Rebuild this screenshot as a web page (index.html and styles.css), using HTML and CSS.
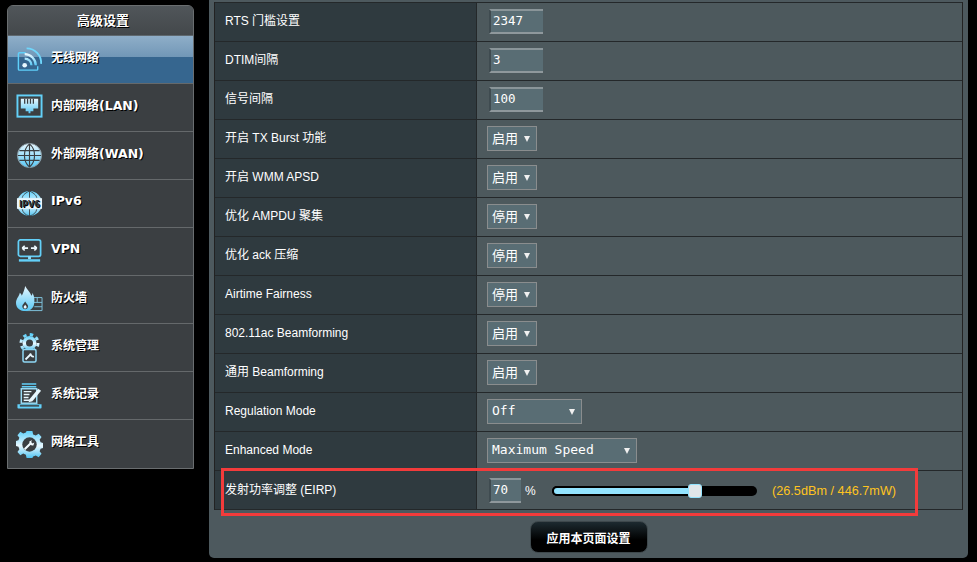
FILE: index.html
```html
<!DOCTYPE html>
<html lang="zh-CN">
<head>
<meta charset="utf-8">
<title>高级设置</title>
<link rel="stylesheet" href="styles.css">
</head>
<body>
<svg class="defs" width="0" height="0" aria-hidden="true">
  <defs>
    <linearGradient id="ice" x1="0" y1="0" x2="0" y2="1">
      <stop offset="0" stop-color="#5fd0fa"/>
      <stop offset="0.55" stop-color="#e8f8ff"/>
      <stop offset="1" stop-color="#4fc4f2"/>
    </linearGradient>
    <linearGradient id="sky" x1="0" y1="0" x2="0" y2="1">
      <stop offset="0" stop-color="#e6f7ff"/>
      <stop offset="1" stop-color="#58c8f5"/>
    </linearGradient>
  </defs>
</svg>
<div class="page">
  <aside class="sidebar">
    <div class="side-title">高级设置</div>
    <nav class="menu">
      <a class="item active">
        <svg class="icon" viewBox="0 0 28 28"><path d="M10 7H3.500a1 1 0 0 0-1 1v16a1 1 0 0 0 1 1h18a1 1 0 0 0 1-1v-3" fill="none" stroke="#5fd0fa" stroke-width="1.500"/><circle cx="9" cy="20" r="2.400" fill="#e8f8ff"/><path d="M9 13a7 7 0 0 1 7 7M9 8.500a11.500 11.500 0 0 1 11.500 11.500" fill="none" stroke="url(#sky)" stroke-width="2.400"/><path d="M11 2.500a15 15 0 0 1 15 16" fill="none" stroke="#6fd6fb" stroke-width="1.900"/></svg>
        <span><span class="cjk">无线网络</span></span>
      </a>
      <a class="item">
        <svg class="icon" viewBox="0 0 28 28"><rect x="1.500" y="1.500" width="25" height="22" fill="none" stroke="#63d0f8" stroke-width="2"/><path d="M5 5h18v10h-5v3h-3v2h-2v-2h-3v-3H5z" fill="url(#sky)"/><path d="M9 5v5M12 5v5M15 5v5M18 5v5" stroke="#3b3f42" stroke-width="1.300"/></svg>
        <span><span class="cjk">内部网络</span>(LAN)</span>
      </a>
      <a class="item">
        <svg class="icon" viewBox="0 0 28 28"><circle cx="14" cy="14" r="12.500" fill="url(#sky)" stroke="#8a9aa2" stroke-width="1"/><path d="M2 14h24M3.500 9h21M3.500 19h21M14 2v24M14 2c-7 6-7 18 0 24M14 2c7 6 7 18 0 24" fill="none" stroke="#3b3f42" stroke-width="1.200"/></svg>
        <span><span class="cjk">外部网络</span>(WAN)</span>
      </a>
      <a class="item">
        <svg class="icon" viewBox="0 0 28 28"><circle cx="14" cy="14" r="13" fill="url(#ice)"/><path d="M14 1v7M14 20v7M14 1C8 4 7 6 6.500 8M14 1c6 3 7 5 7.500 7M6.500 20c.5 3 3 6 7.500 7M21.500 20c-.5 3-3 6-7.500 7" fill="none" stroke="#3b3f42" stroke-width=".9"/><rect x="1" y="8.500" width="26" height="11" fill="#e8f6fc"/><text class="ipv" x="14" y="18" text-anchor="middle">IPV6</text></svg>
        <span class="latin">IPv6</span>
      </a>
      <a class="item">
        <svg class="icon" viewBox="0 0 28 28"><rect x="2.500" y="2" width="23" height="17" rx="2" fill="none" stroke="#63d0f8" stroke-width="1.800"/><path d="M12.500 10.500H6.500M6.500 10.500l2.500-2.500M6.500 10.500l2.500 2.500M15.500 10.500h6M21.500 10.500L19 8M21.500 10.500L19 13" fill="none" stroke="#eef9ff" stroke-width="1.700"/><path d="M12.500 19h3v3h-3z" fill="#8fdcf9"/><rect x="3" y="22" width="22" height="2.500" fill="#63d0f8"/></svg>
        <span class="latin">VPN</span>
      </a>
      <a class="item">
        <svg class="icon" viewBox="0 0 28 28"><path d="M18 12h9v13.500H10M18 17h9M19 21.500h8M22 12v5" fill="none" stroke="#7fc3dd" stroke-width="1"/><path d="M9.500 0c2 4 5 6 6.500 10 1-1 1-2 1-3 2.500 4 2.500 9 1.500 13-1 3.500-4.500 6-8.500 6-5.500 0-10-3-10-8.500 0-4 3-6.500 4-10.500 1 1 2 2 2 3 1.500-3 3-6.500 3.500-10z" fill="url(#sky)"/><path d="M9.500 16c1 2 3 3 3 5s-1.500 3-3 3-3-1-3-3 2-3 3-5z" fill="#3b3f42"/><path d="M9.500 19.500c.8 1 1.500 1.500 1.500 2.500s-.7 1.300-1.500 1.300S8 23 8 22s.8-1.500 1.500-2.500z" fill="#e8f8ff"/></svg>
        <span><span class="cjk">防火墙</span></span>
      </a>
      <a class="item">
        <svg class="icon tall" viewBox="0 0 27 30"><circle cx="13.500" cy="10" r="7" fill="url(#ice)"/><circle cx="13.500" cy="10" r="8.500" fill="none" stroke="url(#ice)" stroke-width="3" stroke-dasharray="3.400 3.275"/><circle cx="13.500" cy="10" r="3.500" fill="#3b3f42"/><rect x="7" y="16.500" width="13" height="12.500" rx="1.500" fill="#3b3f42" stroke="#8ed8f5" stroke-width="1.500"/><path d="M9.500 26.500l5.500-5.500" fill="none" stroke="#e8f8ff" stroke-width="1.800"/><path d="M14.500 20.500a2.800 2.800 0 0 0 3.500 3" fill="none" stroke="#e8f8ff" stroke-width="1.800"/></svg>
        <span><span class="cjk">系统管理</span></span>
      </a>
      <a class="item">
        <svg class="icon" viewBox="0 0 28 28"><path d="M6 2h15M6 5h15" stroke="#63d0f8" stroke-width="1.500"/><rect x="5.500" y="7" width="16" height="15" fill="none" stroke="#9adcf5" stroke-width="1.500"/><path d="M8 10h8M8 13h6M8 16h5M8 19h6" stroke="#e8f8ff" stroke-width="1.500"/><path d="M14 18l9-11 3 2-9 11-4 1z" fill="#e8f8ff"/><path d="M1.500 26.500V23h25v3.500a1 1 0 0 1-1 1h-23a1 1 0 0 1-1-1z" fill="#63d0f8"/><rect x="4" y="24" width="20" height="1.500" fill="#3b3f42"/></svg>
        <span><span class="cjk">系统记录</span></span>
      </a>
      <a class="item">
        <svg class="icon" viewBox="0 0 28 28"><path d="M11 0h6l.8 3.500 2.700 1.100 3-1.800 3 3.500-2 2.800 1 2.600 3 .8v5l-3 .8-1 2.600 2 2.800-3 3.500-3-1.800-2.700 1.100L17 28h-6l-.8-3.500-2.700-1.100-3 1.800-3-3.500 2-2.800-1-2.600-3-.8v-5l3-.8 1-2.600-2-2.800 3-3.500 3 1.800 2.700-1.100z" fill="url(#ice)"/><circle cx="14" cy="14" r="7.500" fill="#3b3f42"/><path d="M9.500 18.500l5-5" stroke="#f2fbff" stroke-width="2.200" stroke-linecap="round"/><path d="M14 10.500a3.500 3.500 0 0 0 4 4.500l1-3-1.800 1-1.500-1.500 1-2z" fill="#f2fbff"/></svg>
        <span><span class="cjk">网络工具</span></span>
      </a>
    </nav>
  </aside>

  <main class="panel">
    <div class="settings">
      <div class="row"><div class="label">RTS 门槛设置</div><div class="value"><div class="field">2347</div></div></div>
      <div class="row"><div class="label">DTIM间隔</div><div class="value"><div class="field">3</div></div></div>
      <div class="row"><div class="label">信号间隔</div><div class="value"><div class="field">100</div></div></div>
      <div class="row"><div class="label">开启 TX Burst 功能</div><div class="value"><div class="select">启用<i></i></div></div></div>
      <div class="row"><div class="label">开启 WMM APSD</div><div class="value"><div class="select">启用<i></i></div></div></div>
      <div class="row"><div class="label">优化 AMPDU 聚集</div><div class="value"><div class="select">停用<i></i></div></div></div>
      <div class="row"><div class="label">优化 ack 压缩</div><div class="value"><div class="select">停用<i></i></div></div></div>
      <div class="row"><div class="label">Airtime Fairness</div><div class="value"><div class="select">停用<i></i></div></div></div>
      <div class="row"><div class="label">802.11ac Beamforming</div><div class="value"><div class="select">启用<i></i></div></div></div>
      <div class="row"><div class="label">通用 Beamforming</div><div class="value"><div class="select">启用<i></i></div></div></div>
      <div class="row"><div class="label">Regulation Mode</div><div class="value"><div class="select mono off">Off<i></i></div></div></div>
      <div class="row"><div class="label">Enhanced Mode</div><div class="value"><div class="select mono speed">Maximum Speed<i></i></div></div></div>
      <div class="row"><div class="label low">发射功率调整 (EIRP)</div>
        <div class="value power">
          <div class="field short">70</div>
          <span class="unit">%</span>
          <div class="slider"><div class="fill" style="width:143px"></div><div class="thumb" style="left:136px"></div></div>
          <span class="reading">(26.5dBm / 446.7mW)</span>
        </div>
      </div>
    </div>
    <div class="actions"><button class="apply" type="button">应用本页面设置</button></div>
    <div class="highlight"></div>
  </main>
</div>
</body>
</html>
```

FILE: styles.css
```css
* { box-sizing: border-box; }
html, body { margin: 0; height: 100%; background: #000; overflow: hidden; }
body { font-family: "Liberation Sans", "Noto Sans CJK SC", sans-serif; color: #fff; }
.defs { position: absolute; }
.page { display: flex; align-items: flex-start; height: 562px; padding-left: 7px; }

.sidebar {
  width: 187px; margin-top: 5px; height: 464px;
  border: 1px solid #6a6e70; border-radius: 6px 6px 0 0;
  background: #3b3f42; overflow: hidden; flex: none;
}
.side-title {
  height: 30px; padding: 6px 0 0 5px; text-align: center;
  font: bold 13px/18px "DejaVu Sans", "Noto Sans CJK SC", sans-serif;
  text-shadow: 1px 1px 0 #000;
  background: linear-gradient(#50565a, #44484b);
  border-bottom: 1px solid #5f686e;
}
.menu { display: flex; flex-direction: column; }
.item {
  height: 48px; display: flex; align-items: center; gap: 8px; padding-left: 8px;
  border-bottom: 1px solid #65696b;
  font: bold 12.500px/16px "DejaVu Sans", "Noto Sans CJK SC", sans-serif;
  text-shadow: 1px 1px 0 #000; color: #fff;
}
.item:last-child { border-bottom: 0; }
.item > span { position: relative; top: -2px; }
.item > span.latin { top: -3px; }
.cjk { font-size: 12px; }
.icon { width: 27px; height: 27px; flex: none; }
.icon.tall { height: 30px; }
.ipv { font: bold 8.500px "DejaVu Sans", sans-serif; fill: #33383b; }
.active { background: linear-gradient(#8faec8 0, #7197b7 45%, #36668f 45%, #36668f 100%); }

.panel {
  position: relative; flex: none;
  width: 759px; height: 558px; margin-left: 15px;
  padding: 2px 5px 0;
  background: #4d595e; border-radius: 0 0 5px 5px;
}
.settings { border-left: 1px solid #222; border-right: 1px solid #222; }
.row { display: flex; height: 39px; border-top: 1px solid #24282a; }
.row:last-child { border-bottom: 1px solid #24282a; height: 40px; }
.label {
  width: 262px; flex: none; background: #2f3a3f;
  padding: 11px 0 0 10px; font-size: 12px; line-height: 15px; color: #fff;
  border-right: 1px solid #24282a; white-space: nowrap;
}
.label.low { padding-top: 12px; }
.value { flex: 1; background: #4d595d; display: flex; align-items: flex-start; padding: 6px 0 0 10px; }
.field {
  width: 54px; height: 25px; margin-left: 2px;
  background: #596d74; color: #fff;
  border-top: 2px solid #8a9599; border-left: 2px solid #3f4b50; border-bottom: 2px solid #8f989c;
  font: 12.500px/20px "DejaVu Sans Mono", monospace; padding-left: 2px;
}
.field.short { width: 32px; }
.select {
  position: relative; width: 50px; height: 25px;
  background: #596d74; border: 1px solid #8a8d8e; color: #fff;
  font-size: 13px; line-height: 21px; padding-left: 4px;
  font-family: "Noto Sans CJK SC", sans-serif;
}
.select i {
  position: absolute; right: 6px; top: 9px; width: 0; height: 0;
  border-left: 3.500px solid transparent; border-right: 3.500px solid transparent; border-top: 6px solid #f0f0f0;
}
.mono { font-family: "DejaVu Sans Mono", monospace; font-size: 13px; line-height: 22px; }
.off { width: 95px; }
.speed { width: 150px; }
.power { align-items: center; padding-top: 1px; }
.unit { margin-left: 4px; width: 27px; font-size: 12px; }
.slider { position: relative; width: 205px; height: 10px; background: #000; border-radius: 5px; }
.fill { height: 10px; background: #93e4ff; border: 2px solid #000; border-radius: 5px 0 0 5px; }
.thumb {
  position: absolute; top: -2px; width: 14px; height: 14px;
  background: #e1e6e9; border: 1px solid #93e4ff; border-radius: 3px;
}
.reading { margin-left: 15px; font-size: 12.700px; color: #ffc41f; white-space: nowrap; }

.actions { display: flex; justify-content: center; padding-top: 11px; }
.apply {
  width: 118px; height: 32px; border: 1px solid #3e484c; border-radius: 8px;
  background: linear-gradient(#1d2a30, #000 60%);
  color: #fff; font: bold 12px/16px "Liberation Sans", "Noto Sans CJK SC", sans-serif; padding: 3px 0 0;
}
.highlight {
  position: absolute; left: 12px; top: 468px; width: 697px; height: 48px;
  border: 3px solid #f33b3b; pointer-events: none;
}
```
